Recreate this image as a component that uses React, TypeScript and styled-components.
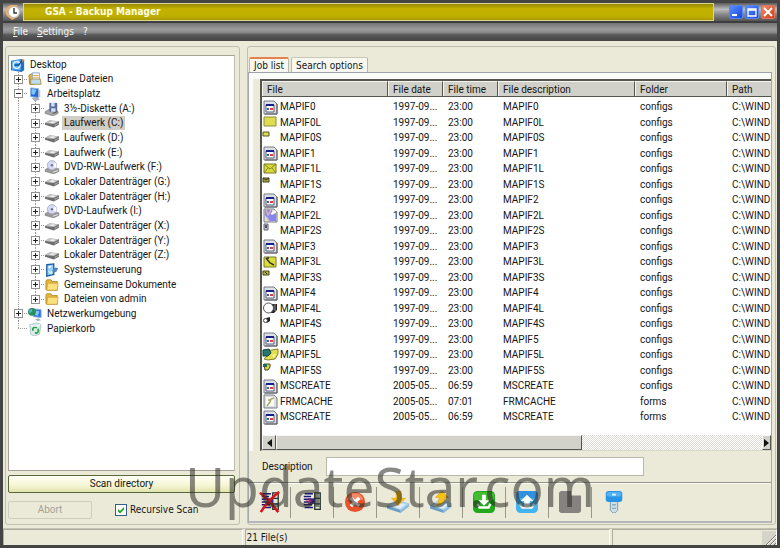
import React, { useState } from "react";
import styled, { createGlobalStyle, css } from "styled-components";

const sans = `Roboto, "Liberation Sans", sans-serif`;
const dialog = `"DejaVu Sans Condensed", "Noto Sans", sans-serif`;

const GlobalStyle = createGlobalStyle`
  * { box-sizing: border-box; }
  body { margin: 0; background: #3c3c3c; font: 10px/14px ${sans}; color: #151515; }
  button, input { font: inherit; color: inherit; margin: 0; padding: 0; }
  button { background: none; border: 0; }
  ul { list-style: none; margin: 0; padding: 0; }
`;

/* ---------- window frame ---------- */

const Window = styled.div`
  position: relative;
  display: flex;
  flex-direction: column;
  min-height: 100vh;
  padding: 3px;
  background: #444;
`;

const TitleBar = styled.header`
  display: flex;
  align-items: center;
  height: 18px;
  background: linear-gradient(#5c5c5c, #bdbdbd 35%, #858585 65%, #555);
`;

const AppIconBox = styled.span`
  display: flex;
  justify-content: center;
  width: 20px;
`;

const Title = styled.h1`
  flex: 1;
  height: 18px;
  margin: 0;
  padding-left: 21px;
  border: 1px solid #dcd68d;
  background: linear-gradient(#968a00, #c3b200 30%, #beae00 80%, #a99900);
  color: #fffde0;
  font: bold 10px/16px ${dialog};
  white-space: nowrap;
`;

const WindowButtons = styled.div`
  display: flex;
  gap: 2px;
  padding: 0 2px 0 15px;
`;

const WindowButton = styled.button<{ $close?: boolean }>`
  display: flex;
  align-items: center;
  justify-content: center;
  width: 14px;
  height: 14px;
  border: 1px solid ${(p) => (p.$close ? "#d9765c" : "#5b85e8")};
  border-radius: 2px;
  background: ${(p) => (p.$close ? "linear-gradient(135deg,#f08a6a,#d63c16)" : "linear-gradient(135deg,#5b8dff,#1548dd)")};
`;

const MenuBar = styled.nav`
  display: flex;
  align-items: center;
  gap: 9px;
  height: 20px;
  padding-left: 10px;
  border-top: 2px solid #3e3e3e;
  background: linear-gradient(#747474, #9b9b9b 35%, #8a8a8a 52%, #585858 66%, #454545);
`;

const MenuItem = styled.button`
  color: #f4f4f4;
  font: 10px/14px ${dialog};
`;

const Body = styled.main`
  display: flex;
  flex: 1;
  gap: 7px;
  padding: 5px 1px 3px 2px;
  background: #ebead9;
`;

/* ---------- left pane ---------- */

const LeftPane = styled.section`
  display: flex;
  flex-direction: column;
  flex: 0 1 235px;
  padding: 8px 4px 5px 2px;
  border: 1px solid #c0bfaf;
  border-radius: 3px;
`;

const Tree = styled.ul`
  flex: 1;
  padding: 1px;
  border: 1px solid #a3a294;
  border-right-color: #bdbcac;
  background: #fff;
`;

const TreeRow = styled.li`
  display: flex;
  align-items: center;
  height: 15px;
  &:nth-child(3n + 2) { height: 14px; }
`;

const dotsDown = `repeating-linear-gradient(#999 0 1px, transparent 1px 2px)`;
const dotsAcross = `repeating-linear-gradient(90deg, #999 0 1px, transparent 1px 2px)`;

const Guide = styled.span<{ $kind: "line" | "node" | "end" }>`
  display: flex;
  align-items: center;
  align-self: stretch;
  width: 17px;
  padding-left: 4px;
  background-repeat: no-repeat;
  background-image: ${dotsDown}${(p) => p.$kind !== "line" && css`, ${dotsAcross}`};
  background-size: 1px ${(p) => (p.$kind === "end" ? "50%" : "100%")}, 9px 1px;
  background-position: 8px 0, 8px 50%;
`;

const Expander = styled.button`
  display: flex;
  align-items: center;
  justify-content: center;
  width: 9px;
  height: 9px;
  border: 1px solid #929292;
  background: #fff;
`;

const TreeLabel = styled.span<{ $selected?: boolean }>`
  margin-left: 2px;
  padding: 0 2px;
  line-height: 14px;
  white-space: nowrap;
  background: ${(p) => (p.$selected ? "#d0cec5" : "transparent")};
`;

const ScanButton = styled.button`
  height: 18px;
  margin-top: 4px;
  border: 1px solid #59683a;
  border-radius: 2px;
  background: linear-gradient(#fffff5, #f5f6d4 60%, #e1e4ae);
`;

const ScanOptions = styled.div`
  display: flex;
  align-items: center;
  gap: 23px;
  margin-top: 8px;
`;

const AbortButton = styled.button`
  width: 84px;
  height: 18px;
  border: 1px solid #cfcdbd;
  border-radius: 2px;
  color: #a4a295;
`;

const CheckLabel = styled.label`
  display: flex;
  align-items: center;
  gap: 3px;
  font: 10px/14px ${dialog};
`;

const CheckBox = styled.input`
  appearance: none;
  width: 12px;
  height: 12px;
  border: 1px solid #35608c;
  background: #fff;
  &:checked {
    background: #fff
      url("data:image/svg+xml,%3Csvg xmlns='http://www.w3.org/2000/svg' viewBox='0 0 10 10'%3E%3Cpath d='M2 4l2 2 4-4v2.600L4 8.600 2 6.600z' fill='%2321a121'/%3E%3C/svg%3E")
      center / 10px no-repeat;
  }
`;

/* ---------- right pane ---------- */

const RightPane = styled.section`
  display: flex;
  flex-direction: column;
  flex: 1;
  min-width: 0;
  padding: 10px 3px 1px 0;
  border: 1px solid #c0bfaf;
  border-radius: 3px;
`;

const Tabs = styled.div`
  display: flex;
  align-items: flex-end;
  gap: 2px;
  height: 15px;
  padding-left: 1px;
`;

const Tab = styled.button<{ $active?: boolean }>`
  height: 15px;
  padding: 0 4px;
  border: 1px solid #b9b9a8;
  border-bottom: 0;
  border-top: ${(p) => (p.$active ? "2px solid #e5814c" : "1px solid #c9c8b7")};
  border-radius: 2px 2px 0 0;
  background: #f8f8f0;
  font: 10px/13px ${dialog};
  white-space: nowrap;
`;

const TabPage = styled.div`
  display: flex;
  flex-direction: column;
  flex: 1;
  min-height: 0;
  border: 1px solid #a5a8ac;
  border-top-color: #9da3aa;
  border-bottom: 2px solid #b5b5bd;
`;

const ListArea = styled.div`
  display: flex;
  flex: 1;
  padding-left: 7px;
  border-top: 6px solid #fbfbf8;
  border-left: 4px solid #fbfbf8;
`;

const FileList = styled.div`
  display: flex;
  flex-direction: column;
  flex: 1;
  min-width: 0;
  border-top: 2px solid #55554e;
  border-left: 2px solid #55554e;
  border-bottom: 1px solid #d8d7ca;
  background: #fff;
`;

const FileArea = styled.div`
  flex: 1;
  overflow: hidden;
`;

const Table = styled.table`
  width: 100%;
  table-layout: fixed;
  border-collapse: separate;
  border-spacing: 0;
`;

const Col = styled.col<{ $w?: number }>`
  ${(p) => p.$w && css`width: ${p.$w}px;`}
`;

const Th = styled.th`
  height: 16px;
  padding: 0 0 0 5px;
  border-top: 1px solid #f4f4f0;
  border-right: 1px solid #55554f;
  border-bottom: 1px solid #55554f;
  box-shadow: inset 1px 0 #f4f4f0;
  background: #d2d1c9;
  font-weight: normal;
  line-height: 13px;
  text-align: left;
  white-space: nowrap;
  &:last-child { border-right: 0; }
`;

const Rows = styled.tbody`
  &::before { content: ""; display: block; height: 2px; }
`;

const FileRow = styled.tr`
  height: 16px;
  &:nth-child(even) { height: 15px; }
`;

const Td = styled.td`
  padding: 0 0 0 5px;
  line-height: 14px;
  white-space: nowrap;
  overflow: hidden;
`;

const NameCell = styled.div`
  display: flex;
  align-items: center;
  gap: 2px;
  height: 15px;
  margin-left: -4px;
`;

const ScrollBar = styled.div`
  display: flex;
  height: 15px;
  background: repeating-conic-gradient(#fff 0 25%, #dddcd5 0 50%) 0 0 / 2px 2px;
`;

const raised = css`
  border: 1px solid #f6f6f2;
  border-right-color: #55554f;
  border-bottom-color: #55554f;
  background: #d2d1ca;
`;

const ScrollArrow = styled.button<{ $narrow?: boolean }>`
  display: flex;
  align-items: center;
  justify-content: center;
  width: ${(p) => (p.$narrow ? 9 : 14)}px;
  ${raised}
`;

const ScrollTrack = styled.div`
  flex: 1;
`;

const ScrollThumb = styled.div`
  width: 63%;
  height: 15px;
  ${raised}
`;

const DescriptionRow = styled.div`
  display: flex;
  align-items: center;
  height: 32px;
  padding-left: 13px;
  border-bottom: 1px solid #96958a;
`;

const DescriptionLabel = styled.label`
  flex: 0 0 64px;
`;

const DescriptionInput = styled.input`
  flex: 0 1 318px;
  min-width: 0;
  height: 19px;
  padding: 0 3px;
  border: 1px solid #b9b8aa;
  background: #fff;
`;

const ToolBar = styled.div`
  display: flex;
  align-items: center;
  height: 38px;
  border-top: 1px solid #fafaf5;
`;

const ToolButton = styled.button`
  display: flex;
  align-items: center;
  justify-content: center;
  flex: 0 0 43px;
  height: 31px;
  padding-bottom: 2px;
  border-right: 1px solid #98978a;
  &:first-child { flex-basis: 42px; }
  &:last-child { border-right: 0; }
`;

/* ---------- status bar ---------- */

const StatusBar = styled.footer`
  display: flex;
  gap: 2px;
  height: 17px;
  border-top: 1px solid #c5c4b4;
  background: #ebead9;
`;

const StatusPart = styled.div<{ $grow: number }>`
  display: flex;
  align-items: center;
  justify-content: space-between;
  flex: ${(p) => p.$grow} 1 0;
  border-top: 1px solid #aeada0;
  border-left: 1px solid #aeada0;
  border-right: 1px solid #fff;
  font: 10px/14px ${dialog};
`;

const Watermark = styled.div`
  position: absolute;
  right: 0;
  bottom: 23px;
  left: 0;
  color: rgba(40, 40, 35, 0.55);
  font: 55px/78px "Noto Sans", "Open Sans", sans-serif;
  text-align: center;
  pointer-events: none;
`;

/* ---------- tree icons ---------- */

type TreeIconKind = "desktop" | "docs" | "computer" | "floppy" | "disk" | "dvd" | "control" | "folder" | "network" | "bin";

const treeDrawings: Record<TreeIconKind, React.ReactNode> = {
  desktop: (
    <>
      <path d="M0 3l12-2 3 2v11l-3 2-12-2z" fill="#2270c4" />
      <path d="M1 3l10-1v12L1 13z" fill="#5aaef0" />
      <circle cx="6.500" cy="8" r="3.800" fill="none" stroke="#eef8ff" strokeWidth="1.500" />
      <path d="M4 8h5l4-6" fill="none" stroke="#0d4c96" strokeWidth="1.500" />
      <path d="M12 1l4 1-3 3z" fill="#c28a63" />
    </>
  ),
  docs: (
    <>
      <path d="M1 4l3-2 3 2v10H2z" fill="#e9b83b" stroke="#a37a1c" />
      <path d="M5 1h8v9H5z" fill="#fff" stroke="#7d9fc4" />
      <path d="M6 4h6M6 6h6" stroke="#e0a040" />
      <path d="M3 8h11l1 6H3z" fill="#bcdcf4" stroke="#ad8b3d" />
    </>
  ),
  computer: (
    <>
      <path d="M3 1l9 1v10l-9-1z" fill="#2366d8" stroke="#8fb1dc" />
      <path d="M4 2l6 1-3 6-3-1z" fill="#83c4fa" />
      <path d="M12 3l2 1v8l-2-1z" fill="#b9c2cf" />
      <path d="M5 13l5-1 3 2-5 2z" fill="#a9b4c2" stroke="#7a8796" strokeWidth=".5" />
    </>
  ),
  floppy: (
    <>
      <path d="M0 11l5-3 10 3v2l-6 3-9-3z" fill="#a4a4a4" stroke="#737373" strokeWidth=".6" />
      <path d="M5 1h9v10H5z" fill="#596b9c" />
      <path d="M7 1h4v4H7zM7 7h5v4H7z" fill="#d5dbf0" />
      <path d="M9 13l5-2" stroke="#444" />
    </>
  ),
  disk: (
    <>
      <path d="M0 8l5-3 11 1v4l-6 3-10-3z" fill="#6e6e6e" />
      <path d="M0 8l5-3 11 1-6 3z" fill="#c3c3c3" />
      <path d="M5 7l4-1 3 1-4 1z" fill="#f4f4f4" />
      <path d="M11 11l5-3" stroke="#aaa" />
      <circle cx="12" cy="10" r=".7" fill="#82c07d" />
    </>
  ),
  dvd: (
    <>
      <path d="M0 11l5-3 11 2v3l-6 3-10-3z" fill="#999" stroke="#757575" strokeWidth=".5" />
      <circle cx="8" cy="6" r="5.300" fill="#d7daf1" stroke="#9d9fc7" strokeWidth=".8" />
      <path d="M8 6l4-3a5 5 0 010 6z" fill="#fff" />
      <circle cx="8" cy="6" r="1.500" fill="#6e75bb" />
      <path d="M9 14l6-2" stroke="#eee" />
    </>
  ),
  control: (
    <>
      <path d="M2 2l8-1v12l-8 2z" fill="#92d0f7" stroke="#1f5c9d" strokeWidth="1.500" />
      <path d="M4 9l3 3 2-5" fill="none" stroke="#dff2ff" strokeWidth="1.500" />
      <path d="M8 8l4-3 3 1-2 4-4 1z" fill="#4f85b8" />
      <path d="M4 5l3-1" stroke="#fff" strokeWidth="2" />
    </>
  ),
  folder: (
    <>
      <path d="M1 4l1-2h5l1 2h6v10H2L1 13z" fill="#e6b63c" stroke="#a87b18" strokeWidth=".8" />
      <path d="M3 6h12l-1 8H2z" fill="#fbe07e" stroke="#bb9028" strokeWidth=".6" />
    </>
  ),
  network: (
    <>
      <path d="M6 2l9 1v9l-9-1z" fill="#2c75df" stroke="#8fb3dd" />
      <path d="M9 4l4 1-2 5-3-1z" fill="#8cc8fb" />
      <circle cx="4.500" cy="5.500" r="4.500" fill="#2b9156" />
      <path d="M1 4l3-2 1 3-3 2z" fill="#4db4e8" />
      <path d="M8 14l4-1 3 2-4 1z" fill="#9fb0c4" />
    </>
  ),
  bin: (
    <>
      <path d="M2 3l8-2 5 2-2 11-6 2-4-2z" fill="#dceaf0" stroke="#9db3be" strokeWidth=".8" />
      <path d="M6 10a2.500 2.500 0 014-3M11 8a2.500 2.500 0 01-3 4" fill="none" stroke="#24a43a" strokeWidth="1.800" />
      <path d="M3 4l6 1 5-2" fill="none" stroke="#fff" />
    </>
  ),
};

const TreeIcon = ({ kind }: { kind: TreeIconKind }) => (
  <svg width="16" height="14" viewBox="0 0 16 16" aria-hidden="true">
    {treeDrawings[kind]}
  </svg>
);

/* ---------- file icons ---------- */

type FileIconKind = "form" | "plain" | "plainS" | "mail" | "mailS" | "page" | "pageS" | "note" | "noteS" | "ball" | "ballS" | "post" | "postS" | "text";

const sheet = <path d="M1 1h10l3 3v10H1z" fill="#dcdfe4" stroke="#777b83" />;

const fileDrawings: Record<FileIconKind, React.ReactNode> = {
  form: (
    <>
      {sheet}
      <path d="M3 5h8v7H3z" fill="#fff" stroke="#555b78" />
      <path d="M3 4h8v2H3z" fill="#14218d" />
      <path d="M4 8h2v2H4z" fill="#3c55c9" />
      <path d="M7 8h3v2H7z" fill="#d64339" />
      <path d="M14 4v10H2" fill="none" stroke="#5d5f66" />
    </>
  ),
  plain: <path d="M1 2h12v9H1z" fill="#dddd4e" stroke="#8f8f38" />,
  plainS: <path d="M0 1h6v4H0z" fill="#dddd4e" stroke="#55552a" />,
  mail: (
    <>
      <path d="M1 2h12v9H1z" fill="#d9dc38" stroke="#77782a" />
      <path d="M1 2l6 5 6-5M1 11l4-5M13 11L9 6" fill="none" stroke="#84852a" />
    </>
  ),
  mailS: (
    <>
      <path d="M0 1h6v4H0z" fill="#a7a72f" stroke="#44441d" />
      <path d="M0 1l3 2 3-2" fill="none" stroke="#333" />
    </>
  ),
  page: (
    <>
      {sheet}
      <path d="M2 2h7v5l4-2v8H6L2 7z" fill="#8387ef" />
      <path d="M3 2l2 5 3-5M4 9l2 4" stroke="#e5aabb" strokeWidth="1.500" fill="none" />
      <path d="M8 6l5-3" stroke="#fff" strokeWidth="2" />
    </>
  ),
  pageS: (
    <>
      <path d="M1 0h4v6H1z" fill="#c1c2ee" stroke="#666" />
      <path d="M2 1h2v3H2z" fill="#555" />
    </>
  ),
  note: (
    <>
      <path d="M1 2h12v10H1z" fill="#dadb38" stroke="#77782a" />
      <path d="M3 3l4 5 4 2M4 3h2" stroke="#333" strokeWidth="1.500" fill="none" />
    </>
  ),
  noteS: (
    <>
      <path d="M0 1h6v4H0z" fill="#b7b730" stroke="#44441d" />
      <path d="M2 2l2 2" stroke="#222" />
    </>
  ),
  ball: (
    <>
      <path d="M8 3h6v6l-3 3H8z" fill="#222" />
      <circle cx="5.500" cy="7" r="5" fill="#fff" stroke="#555" />
      <path d="M12 3v7" stroke="#999" />
    </>
  ),
  ballS: (
    <>
      <path d="M3 1l4-1v4L4 6z" fill="#222" />
      <circle cx="2.500" cy="3.500" r="2" fill="#fff" stroke="#444" />
    </>
  ),
  post: (
    <>
      <path d="M3 3l12-2 0 5-3 5-7 1-4-1 4-4z" fill="#e4df52" stroke="#85812a" />
      <path d="M0 2l6-1 2 4-3 3H0z" fill="#217a6d" stroke="#173f3a" />
      <path d="M9 7l4-1-2 4" fill="#fff6a0" />
    </>
  ),
  postS: (
    <>
      <path d="M1 1h6v3L5 7H2z" fill="#ddd64c" stroke="#49471a" />
      <path d="M0 1h4v3H0z" fill="#236b52" />
    </>
  ),
  text: (
    <>
      {sheet}
      <path d="M3 3h8v9H3z" fill="#fbfbf3" />
      <path d="M4 12l3-4 1-3 3-1M5 6h3" fill="none" stroke="#a3a768" strokeWidth="1.500" />
    </>
  ),
};

const FileIcon = ({ kind }: { kind: FileIconKind }) => (
  <svg width="15" height="15" viewBox="0 0 15 15" overflow="visible" aria-hidden="true">
    {fileDrawings[kind]}
  </svg>
);

/* ---------- toolbar icons ---------- */

const listGlyph = (
  <>
    <path d="M4 3h9M3 6h8M3 9h8M3 12h8M3 15h9M4 18h9" stroke="#17177a" strokeWidth="1.600" />
    <path d="M15 2h6v18h-6zM15 8h6M15 14h6" fill="#dfe3d2" stroke="#25322e" strokeWidth="1.400" />
    <path d="M9 8h6v6H9z" fill="#28288e" />
  </>
);

const Tray = () => (
  <>
    <path d="M0 16l10-6 14 4-9 7z" fill="#b5dbf4" stroke="#82b0d0" strokeWidth=".6" />
    <path d="M0 16l15 5v3L0 19z" fill="#6b9dc3" />
    <path d="M15 21l9-7v3l-9 7z" fill="#8fbbd9" />
    <path d="M4 16l7-4 9 3-6 4z" fill="#deeffa" />
  </>
);

const tools: { label: string; art: React.ReactNode }[] = [
  {
    label: "Clear job list",
    art: (
      <>
        {listGlyph}
        <path d="M1 2q9 7 20 21M22 1Q10 10 2 23" stroke="#dc141c" strokeWidth="2.800" fill="none" />
      </>
    ),
  },
  {
    label: "Edit job list",
    art: (
      <>
        {listGlyph}
        <path d="M5 11h5M8 8l3 3-3 3" stroke="#a02666" strokeWidth="1.500" fill="none" />
      </>
    ),
  },
  {
    label: "Cancel",
    art: (
      <>
        <circle cx="12" cy="12" r="11" fill="#e8532c" />
        <path d="M3 9a9.500 9.500 0 0118 0q-9 4-18 0z" fill="#f28a67" />
        <path d="M7.500 7.500l9 9M16.500 7.500l-9 9" stroke="#fff" strokeWidth="3.500" />
      </>
    ),
  },
  {
    label: "Load job list",
    art: (
      <>
        <Tray />
        <path d="M10 0h5v8h5l-8 8-7-8h5z" fill="#fbc20e" stroke="#d79a06" strokeWidth=".6" />
      </>
    ),
  },
  {
    label: "Save job list",
    art: (
      <>
        <Tray />
        <path d="M13 0l7 7h-4q0 8-9 9 3-3 3-9H6z" fill="#fbc20e" stroke="#d79a06" strokeWidth=".6" />
      </>
    ),
  },
  {
    label: "Backup",
    art: (
      <>
        <rect x="0" y="0" width="24" height="24" rx="5" fill="#22a81c" />
        <rect x="1" y="1" width="22" height="10" rx="4" fill="#44bd34" />
        <path d="M10 4h4v6h4l-6 6-6-6h4z" fill="#fff" />
        <path d="M5 14l2 4h10l2-4" fill="none" stroke="#fff" strokeWidth="2.500" />
      </>
    ),
  },
  {
    label: "Restore",
    art: (
      <>
        <rect x="0" y="0" width="24" height="24" rx="5" fill="#43b3ef" />
        <rect x="0" y="0" width="24" height="8" rx="4" fill="#3390dd" />
        <path d="M12 4l7 7h-4v6H9v-6H5z" fill="#fff" />
        <path d="M4 14l3 4h10l3-4" fill="none" stroke="#fff" strokeWidth="2.500" />
      </>
    ),
  },
  {
    label: "Stop",
    art: <path d="M2 0h11v5h11v17l-2 2H2l-2-2V2z" fill="#85827f" />,
  },
  {
    label: "Register",
    art: (
      <>
        <path d="M8 10h8v11l-3 3h-2l-3-3z" fill="#cbdfe9" stroke="#7698ab" />
        <path d="M10 15h4M10 19h4" stroke="#8caab9" strokeWidth="1.500" />
        <rect x="3" y="0" width="18" height="12" rx="3" fill="#2993e6" />
        <rect x="4" y="1" width="16" height="5" rx="2" fill="#55b2f5" />
        <path d="M10 4h4" stroke="#e4f6ff" strokeWidth="2" />
      </>
    ),
  },
];

/* ---------- data ---------- */

type Node = { label: string; icon: TreeIconKind; level: 0 | 1 | 2; mark?: "+" | "-"; last?: boolean };

const nodes: Node[] = [
  { label: "Desktop", icon: "desktop", level: 0 },
  { label: "Eigene Dateien", icon: "docs", level: 1, mark: "+" },
  { label: "Arbeitsplatz", icon: "computer", level: 1, mark: "-" },
  { label: "3½-Diskette (A:)", icon: "floppy", level: 2, mark: "+" },
  { label: "Laufwerk (C:)", icon: "disk", level: 2, mark: "+" },
  { label: "Laufwerk (D:)", icon: "disk", level: 2, mark: "+" },
  { label: "Laufwerk (E:)", icon: "disk", level: 2, mark: "+" },
  { label: "DVD-RW-Laufwerk (F:)", icon: "dvd", level: 2, mark: "+" },
  { label: "Lokaler Datenträger (G:)", icon: "disk", level: 2, mark: "+" },
  { label: "Lokaler Datenträger (H:)", icon: "disk", level: 2, mark: "+" },
  { label: "DVD-Laufwerk (I:)", icon: "dvd", level: 2, mark: "+" },
  { label: "Lokaler Datenträger (X:)", icon: "disk", level: 2, mark: "+" },
  { label: "Lokaler Datenträger (Y:)", icon: "disk", level: 2, mark: "+" },
  { label: "Lokaler Datenträger (Z:)", icon: "disk", level: 2, mark: "+" },
  { label: "Systemsteuerung", icon: "control", level: 2, mark: "+" },
  { label: "Gemeinsame Dokumente", icon: "folder", level: 2, mark: "+" },
  { label: "Dateien von admin", icon: "folder", level: 2, mark: "+", last: true },
  { label: "Netzwerkumgebung", icon: "network", level: 1, mark: "+" },
  { label: "Papierkorb", icon: "bin", level: 1, last: true },
];

type FileEntry = [name: string, icon: FileIconKind, date?: string, time?: string, folder?: string];

const files: FileEntry[] = [
  ["MAPIF0", "form"],
  ["MAPIF0L", "plain"],
  ["MAPIF0S", "plainS"],
  ["MAPIF1", "form"],
  ["MAPIF1L", "mail"],
  ["MAPIF1S", "mailS"],
  ["MAPIF2", "form"],
  ["MAPIF2L", "page"],
  ["MAPIF2S", "pageS"],
  ["MAPIF3", "form"],
  ["MAPIF3L", "note"],
  ["MAPIF3S", "noteS"],
  ["MAPIF4", "form"],
  ["MAPIF4L", "ball"],
  ["MAPIF4S", "ballS"],
  ["MAPIF5", "form"],
  ["MAPIF5L", "post"],
  ["MAPIF5S", "postS"],
  ["MSCREATE", "form", "2005-05...", "06:59"],
  ["FRMCACHE", "text", "2005-05...", "07:01", "forms"],
  ["MSCREATE", "form", "2005-05...", "06:59", "forms"],
];

const columns: [string, number?][] = [
  ["File", 126],
  ["File date", 55],
  ["File time", 55],
  ["File description", 137],
  ["Folder", 92],
  ["Path"],
];

export default function App() {
  const [selected, setSelected] = useState("Laufwerk (C:)");
  const [tab, setTab] = useState("Job list");
  return (
    <>
      <GlobalStyle />
      <Window>
        <TitleBar>
          <AppIconBox>
            <svg width="18" height="18" viewBox="0 0 18 18" aria-hidden="true">
              <path d="M3 13a7 7 0 014-11l6 0 3 6-2 6-6 3z" fill="#e6ad6c" />
              <circle cx="10" cy="9" r="5.500" fill="#fff" stroke="#b7b7b7" />
              <path d="M10 5v5h3" fill="none" stroke="#333" strokeWidth="1.400" />
            </svg>
          </AppIconBox>
          <Title>GSA - Backup Manager</Title>
          <WindowButtons>
            <WindowButton aria-label="Minimize">
              <svg width="10" height="10" viewBox="0 0 10 10"><path d="M1 8h5" stroke="#fff" strokeWidth="2" /></svg>
            </WindowButton>
            <WindowButton aria-label="Maximize">
              <svg width="10" height="10" viewBox="0 0 10 10"><path d="M1 2h8v7H1zM1 3h8" fill="none" stroke="#fff" strokeWidth="1.300" /></svg>
            </WindowButton>
            <WindowButton aria-label="Close" $close>
              <svg width="10" height="10" viewBox="0 0 10 10"><path d="M1 1l8 8M9 1L1 9" stroke="#fff" strokeWidth="1.800" /></svg>
            </WindowButton>
          </WindowButtons>
        </TitleBar>
        <MenuBar>
          <MenuItem><u>F</u>ile</MenuItem>
          <MenuItem><u>S</u>ettings</MenuItem>
          <MenuItem>?</MenuItem>
        </MenuBar>

        <Body>
          <LeftPane>
            <Tree>
              {nodes.map((n) => (
                <TreeRow key={n.label}>
                  {n.level === 2 && <Guide $kind="line" />}
                  {n.level > 0 && (
                    <Guide $kind={n.last ? "end" : "node"}>
                      {n.mark && (
                        <Expander aria-label={n.mark === "+" ? `Expand ${n.label}` : `Collapse ${n.label}`}>
                          <svg width="5" height="5" viewBox="0 0 5 5">
                            <path d={n.mark === "+" ? "M0 2h5v1H0zM2 0h1v5H2z" : "M0 2h5v1H0z"} fill="#222" />
                          </svg>
                        </Expander>
                      )}
                    </Guide>
                  )}
                  <TreeIcon kind={n.icon} />
                  <TreeLabel $selected={n.label === selected} onClick={() => setSelected(n.label)}>
                    {n.label}
                  </TreeLabel>
                </TreeRow>
              ))}
            </Tree>
            <ScanButton>Scan directory</ScanButton>
            <ScanOptions>
              <AbortButton disabled>Abort</AbortButton>
              <CheckLabel>
                <CheckBox type="checkbox" defaultChecked />
                Recursive Scan
              </CheckLabel>
            </ScanOptions>
          </LeftPane>

          <RightPane>
            <Tabs role="tablist">
              {["Job list", "Search options"].map((t) => (
                <Tab key={t} role="tab" aria-selected={t === tab} $active={t === tab} onClick={() => setTab(t)}>
                  {t}
                </Tab>
              ))}
            </Tabs>
            <TabPage>
              <ListArea>
                <FileList>
                  <FileArea>
                    <Table>
                      <colgroup>
                        {columns.map(([name, w]) => <Col key={name} $w={w} />)}
                      </colgroup>
                      <thead>
                        <tr>{columns.map(([name]) => <Th key={name}>{name}</Th>)}</tr>
                      </thead>
                      <Rows>
                        {files.map(([name, icon, date = "1997-09...", time = "23:00", folder = "configs"], i) => (
                          <FileRow key={i}>
                            <Td>
                              <NameCell><FileIcon kind={icon} />{name}</NameCell>
                            </Td>
                            <Td>{date}</Td>
                            <Td>{time}</Td>
                            <Td>{name}</Td>
                            <Td>{folder}</Td>
                            <Td>C:\WIND</Td>
                          </FileRow>
                        ))}
                      </Rows>
                    </Table>
                  </FileArea>
                  <ScrollBar>
                    <ScrollArrow aria-label="Scroll left">
                      <svg width="5" height="8" viewBox="0 0 5 8"><path d="M5 0v8L0 4z" fill="#111" /></svg>
                    </ScrollArrow>
                    <ScrollTrack><ScrollThumb /></ScrollTrack>
                    <ScrollArrow aria-label="Scroll right" $narrow>
                      <svg width="5" height="8" viewBox="0 0 5 8"><path d="M0 0v8l5-4z" fill="#111" /></svg>
                    </ScrollArrow>
                  </ScrollBar>
                </FileList>
              </ListArea>
              <DescriptionRow>
                <DescriptionLabel htmlFor="description">Description</DescriptionLabel>
                <DescriptionInput id="description" />
              </DescriptionRow>
              <ToolBar>
                {tools.map((t) => (
                  <ToolButton key={t.label} aria-label={t.label}>
                    <svg width="22" height="22" viewBox="0 0 24 24" aria-hidden="true">{t.art}</svg>
                  </ToolButton>
                ))}
              </ToolBar>
            </TabPage>
          </RightPane>
        </Body>

        <StatusBar>
          <StatusPart $grow={240} />
          <StatusPart $grow={365}>21 File(s)</StatusPart>
          <StatusPart $grow={164}>
            <span />
            <svg width="14" height="14" viewBox="0 0 14 14" aria-hidden="true">
              <path d="M0 0h14v14H0z" fill="#d5d4c9" />
              <path d="M4 14L14 4M8 14l6-6M12 14l2-2" stroke="#77766c" />
              <path d="M5 14l9-9M9 14l5-5" stroke="#fff" />
            </svg>
          </StatusPart>
        </StatusBar>
        <Watermark>UpdateStar.com</Watermark>
      </Window>
    </>
  );
}
